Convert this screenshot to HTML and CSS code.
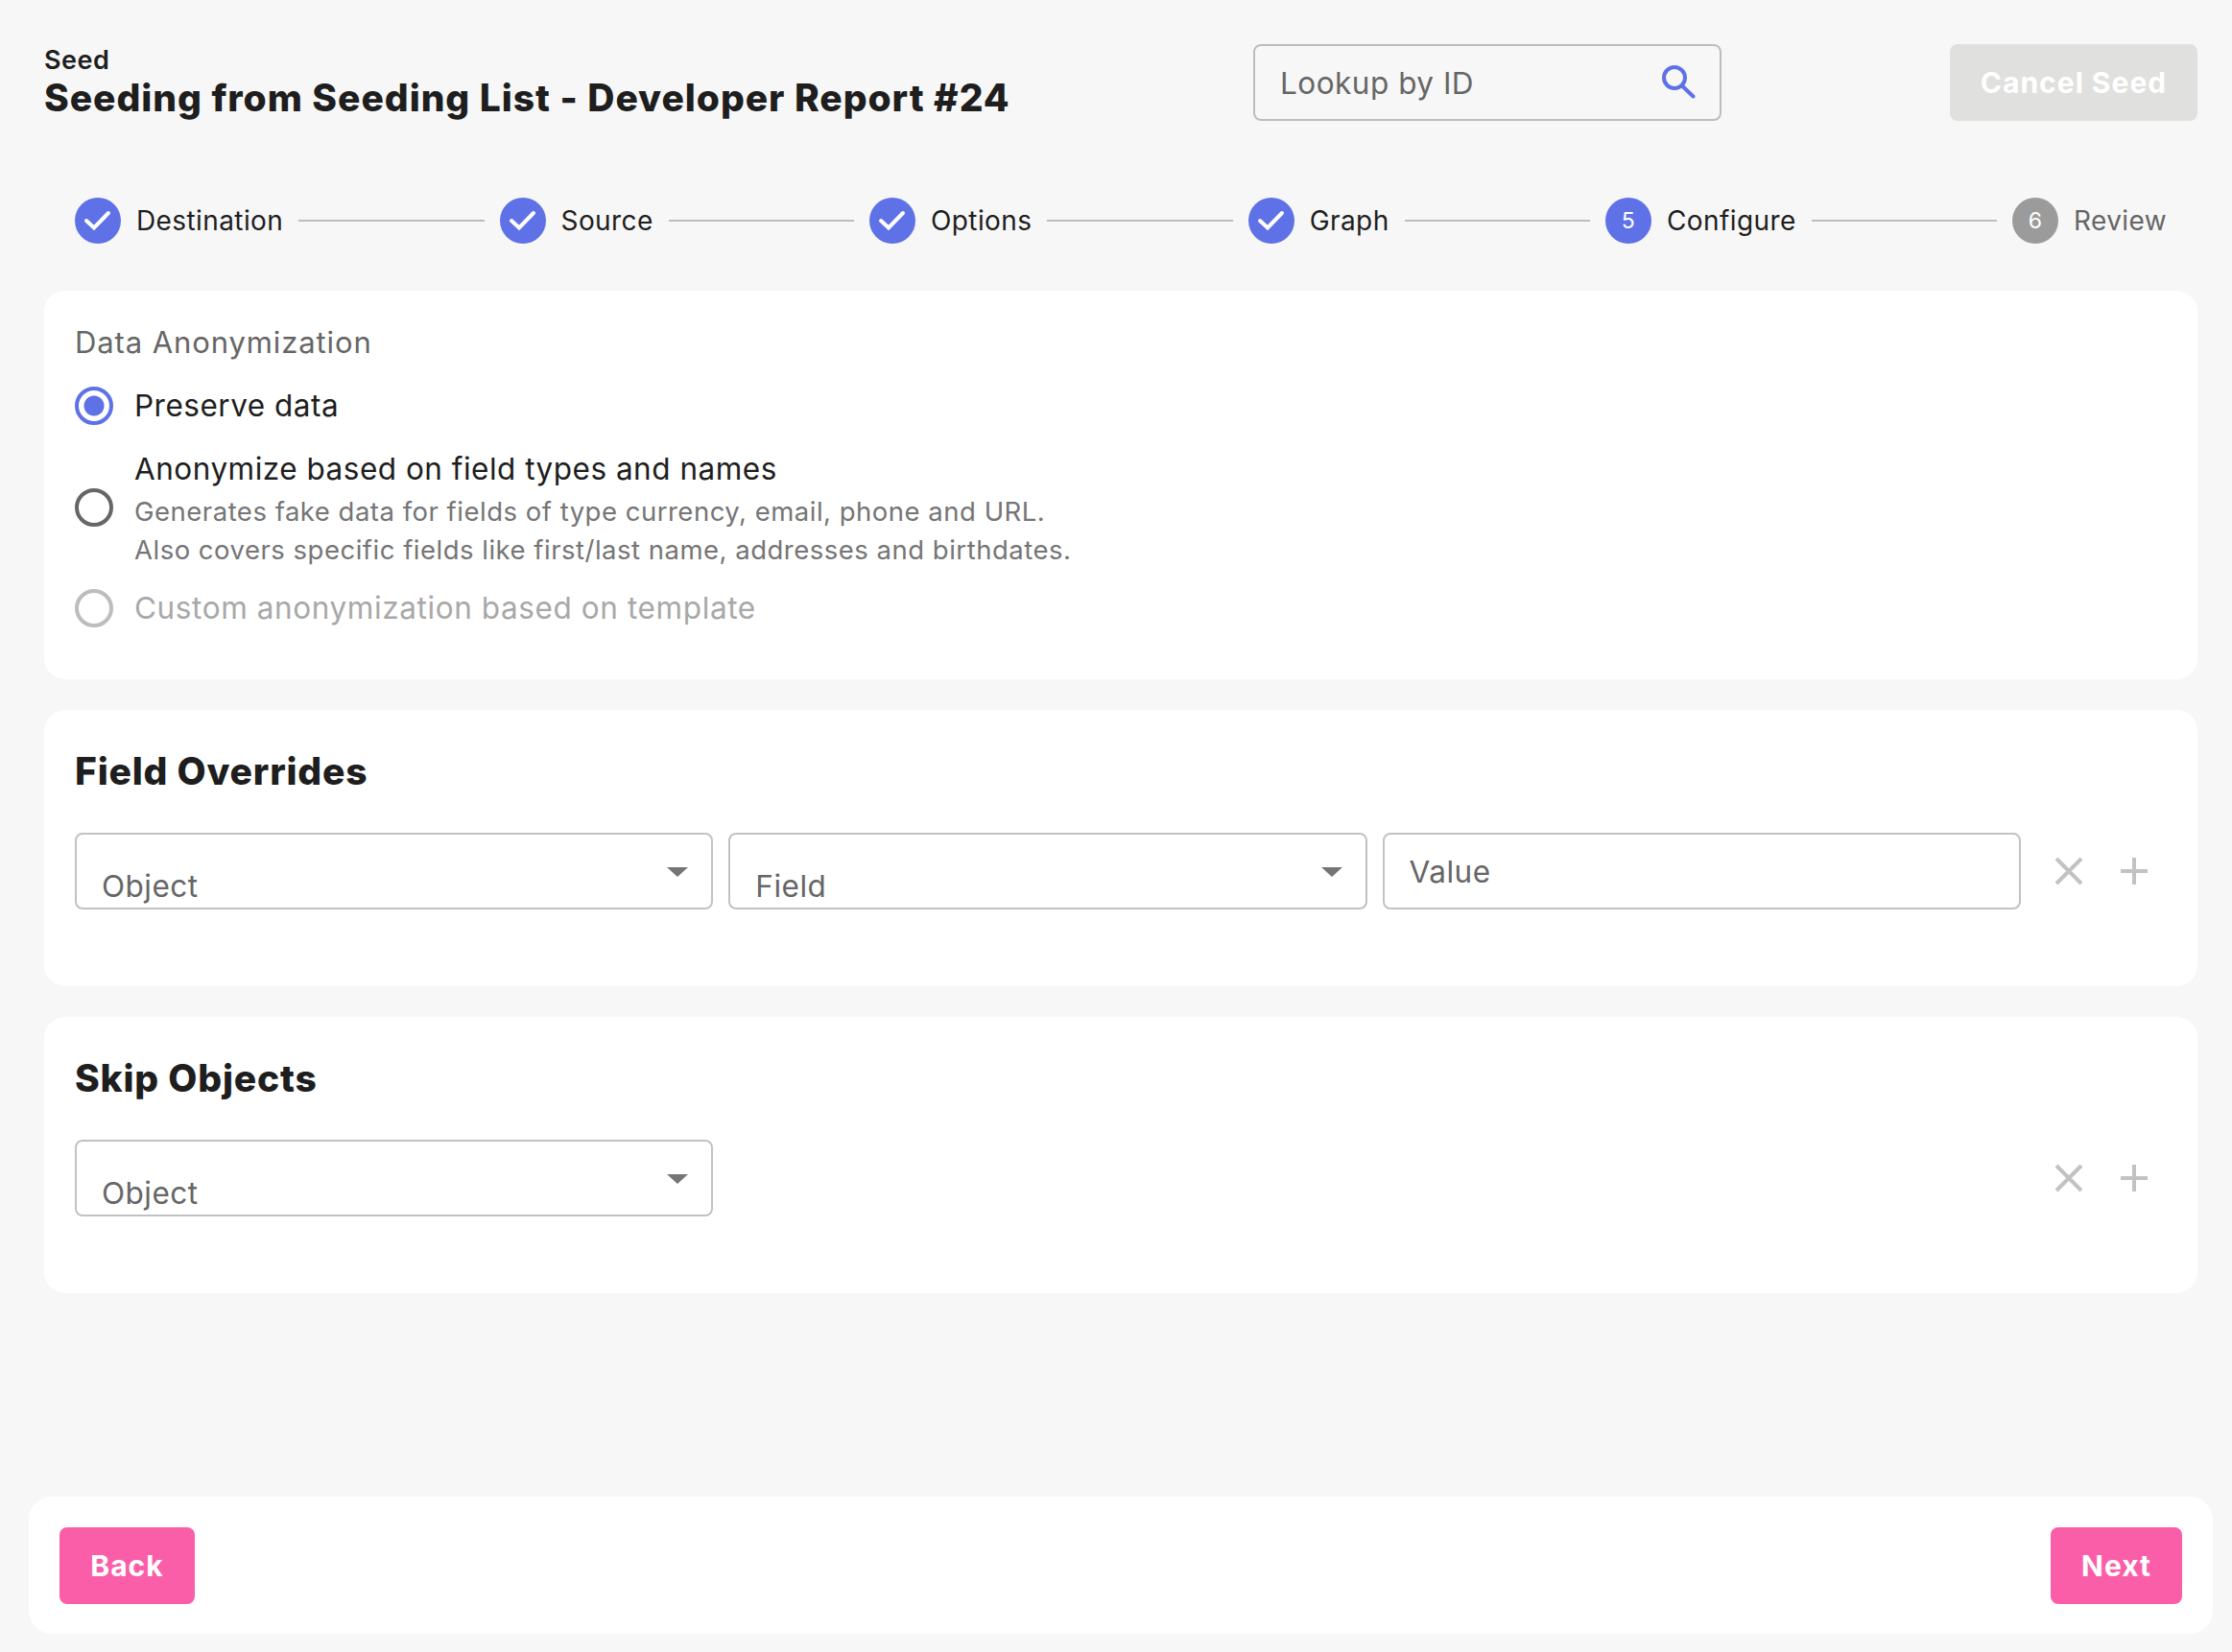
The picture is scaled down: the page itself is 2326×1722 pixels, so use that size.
FILE: index.html
```html
<!doctype html>
<html lang="en">
<head>
  <meta charset="UTF-8">
  <title>Seed</title>
  <link rel="stylesheet" href="styles.css">
</head>
<body>
<div id="app">
  <div class="header">
    <div class="title-block">
      <div class="eyebrow">Seed</div>
      <h1>Seeding from Seeding List - Developer Report #24</h1>
    </div>
    <div class="lookup">
      <input type="text" placeholder="Lookup by ID">
      <svg width="36" height="36" viewBox="0 0 36 36" fill="none" stroke="#5f71e6" stroke-width="4" stroke-linecap="round"><circle cx="14" cy="13" r="11"/><path d="M22 21.500 L33.500 32.500"/></svg>
    </div>
    <button class="btn-cancel">Cancel Seed</button>
  </div>

  <div class="steps">
    <div class="step"><span class="dot"><svg width="32" height="32" viewBox="0 0 32 32" fill="none" stroke="#fff" stroke-width="4" stroke-linecap="round"><path d="M4 16 L12 23.500 L27 8"/></svg></span>Destination</div>
    <div class="line"></div>
    <div class="step"><span class="dot"><svg width="32" height="32" viewBox="0 0 32 32" fill="none" stroke="#fff" stroke-width="4" stroke-linecap="round"><path d="M4 16 L12 23.500 L27 8"/></svg></span>Source</div>
    <div class="line"></div>
    <div class="step"><span class="dot"><svg width="32" height="32" viewBox="0 0 32 32" fill="none" stroke="#fff" stroke-width="4" stroke-linecap="round"><path d="M4 16 L12 23.500 L27 8"/></svg></span>Options</div>
    <div class="line"></div>
    <div class="step"><span class="dot"><svg width="32" height="32" viewBox="0 0 32 32" fill="none" stroke="#fff" stroke-width="4" stroke-linecap="round"><path d="M4 16 L12 23.500 L27 8"/></svg></span>Graph</div>
    <div class="line"></div>
    <div class="step"><span class="dot">5</span>Configure</div>
    <div class="line"></div>
    <div class="step todo"><span class="dot">6</span>Review</div>
  </div>

  <div class="card card-anon">
    <div class="label">Data Anonymization</div>
    <div class="option"><span class="radio checked"></span><div>Preserve data</div></div>
    <div class="option"><span class="radio radio-mid"></span>
      <div>
        <div>Anonymize based on field types and names</div>
        <div class="hint">Generates fake data for fields of type currency, email, phone and URL.<br>Also covers specific fields like first/last name, addresses and birthdates.</div>
      </div>
    </div>
    <div class="option disabled"><span class="radio"></span><div>Custom anonymization based on template</div></div>
  </div>

  <div class="card">
    <h2>Field Overrides</h2>
    <div class="row">
      <div class="select">Object</div>
      <div class="select">Field</div>
      <input class="text-input" type="text" placeholder="Value">
      <div class="row-actions">
        <svg width="30" height="30" viewBox="0 0 30 30" stroke="#c2c2c2" stroke-width="4"><path d="M2 2 L28 28 M28 2 L2 28"/></svg>
        <svg width="30" height="30" viewBox="0 0 30 30" stroke="#c2c2c2" stroke-width="4"><path d="M15 1 V29 M1 15 H29"/></svg>
      </div>
    </div>
  </div>

  <div class="card">
    <h2>Skip Objects</h2>
    <div class="row">
      <div class="select">Object</div>
      <div class="row-gap"></div>
      <div class="row-actions">
        <svg width="30" height="30" viewBox="0 0 30 30" stroke="#c2c2c2" stroke-width="4"><path d="M2 2 L28 28 M28 2 L2 28"/></svg>
        <svg width="30" height="30" viewBox="0 0 30 30" stroke="#c2c2c2" stroke-width="4"><path d="M15 1 V29 M1 15 H29"/></svg>
      </div>
    </div>
  </div>

  <div class="footer">
    <button class="btn-pink btn-back">Back</button>
    <button class="btn-pink btn-next">Next</button>
  </div>
</div>
</body>
</html>
```

FILE: styles.css
```css
* {
  margin: 0;
  padding: 0;
  box-sizing: border-box;
}
html, body {
  height: 100%;
  width: 100%;
}
body {
  background: #f7f7f7;
  color: #1e1e1e;
  font-family: Inter, "Liberation Sans", sans-serif;
  font-size: 31.500px;
  letter-spacing: 0.5px;
}
#app {
  height: 100%;
  display: flex;
  flex-direction: column;
  padding: 46px 20px 19px 30px;
}

.header {
  display: flex;
  align-items: center;
  height: 80px;
  padding: 0 16px;
}
.title-block {
  width: 1260px;
}
.eyebrow {
  font-size: 27px;
  font-weight: 600;
  line-height: 32px;
}
h1 {
  font-size: 39px;
  font-weight: 800;
  line-height: 46px;
  letter-spacing: 0.96px;
}
.lookup {
  width: 488px;
  height: 80px;
  display: flex;
  align-items: center;
  justify-content: space-between;
  border: 2px solid #bdbdbd;
  border-radius: 8px;
  padding: 0 25px 0 26px;
}
.lookup input, .text-input {
  border: 0;
  outline: 0;
  background: transparent;
  font: inherit;
  letter-spacing: inherit;
  color: #666;
}
.lookup input {
  width: 340px;
}
input::placeholder {
  color: #666;
  opacity: 1;
}
.btn-cancel {
  margin-left: auto;
  width: 258px;
  height: 80px;
  border: 0;
  border-radius: 8px;
  background: #e0e0de;
  color: #fff;
  font: 700 30px Inter, sans-serif;
  letter-spacing: 1px;
}

.steps {
  display: flex;
  align-items: center;
  height: 48px;
  margin-top: 80px;
  margin-bottom: 17px;
  padding: 0 48px;
  font-size: 28px;
  letter-spacing: 0.4px;
}
.step {
  display: flex;
  align-items: center;
  gap: 16px;
}
.dot {
  width: 48px;
  height: 48px;
  border-radius: 50%;
  background: #5f71e6;
  color: #fff;
  font-size: 23px;
  display: flex;
  align-items: center;
  justify-content: center;
}
.todo {
  color: #666;
}
.todo .dot {
  background: #9b9b9b;
}
.line {
  flex: 1;
  height: 2px;
  margin: 0 16px;
  background: #bdbdbd;
}

.card {
  background: #fff;
  border-radius: 22px;
  margin: 32px 16px 0;
  padding: 32px;
  height: 288px;
}
.card-anon {
  height: 405px;
  padding-top: 34px;
}
.label {
  color: #666;
  line-height: 40px;
  font-size: 31px;
  letter-spacing: 0.9px;
}
.option {
  display: flex;
  align-items: center;
  gap: 22px;
  margin-top: 26px;
  line-height: 40px;
}
.radio {
  width: 40px;
  height: 40px;
  border: 4px solid #666;
  border-radius: 50%;
  flex: none;
}
.radio.checked {
  border-color: #5f71e6;
  background: radial-gradient(circle, #5f71e6 0 10px, #fff 11px);
}
.radio-mid {
  margin-bottom: 4px;
}
.hint {
  color: #757575;
  font-size: 27.500px;
  margin-top: 4px;
}
.option.disabled {
  color: #a8a8a8;
  margin-top: 21px;
  letter-spacing: 0.6px;
}
.disabled .radio {
  border-color: #bdbdbd;
}

h2 {
  font-size: 39px;
  font-weight: 800;
  line-height: 64px;
  letter-spacing: 0.8px;
  margin-bottom: 32px;
}
.row {
  display: flex;
  align-items: center;
  gap: 16px;
}
.select, .text-input {
  flex: 0 0 665.300px;
  height: 80px;
  border: 2px solid #c2c2c2;
  border-radius: 8px;
  padding: 0 26px;
  color: #666;
}
.select {
  position: relative;
  padding-top: 32px;
  line-height: 44px;
}
.select::after {
  content: "";
  position: absolute;
  right: 24px;
  top: 34px;
  border-left: 11px solid transparent;
  border-right: 11px solid transparent;
  border-top: 10px solid #757575;
}
.row-gap {
  flex: 0 0 1346.600px;
}
.row-actions {
  display: flex;
  gap: 38px;
  margin-left: 19px;
}

.footer {
  margin-top: auto;
  height: 143px;
  background: #fff;
  border-radius: 24px;
  display: flex;
  align-items: center;
  justify-content: space-between;
  padding: 0 32px;
}
.btn-pink {
  height: 80px;
  border: 0;
  border-radius: 8px;
  background: #fa5ea8;
  color: #fff;
  font: 700 30px Inter, sans-serif;
  letter-spacing: 1px;
}
.btn-back {
  width: 141px;
}
.btn-next {
  width: 137px;
}
```
